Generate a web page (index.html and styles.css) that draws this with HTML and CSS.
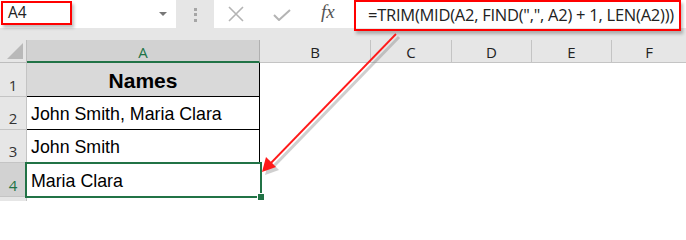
FILE: index.html
```html
<!DOCTYPE html>
<html>
<head>
<meta charset="utf-8">
<link rel="stylesheet" href="styles.css">
</head>
<body>
<div class="app">
  <div class="formula-bar">
    <div class="namebox">
      <span class="name">A4</span>
      <span class="drop"></span>
      <div class="hl hl-name"></div>
    </div>
    <div class="sep"><span class="dots"></span></div>
    <div class="tools">
      <svg class="ico" width="18" height="16" viewBox="0 0 18 16"><path d="M2 1 L16 15 M16 1 L2 15" stroke="#b4b4b4" stroke-width="1.6" fill="none"/></svg>
      <svg class="ico" width="18" height="12" viewBox="0 0 18 12"><path d="M1 6 L6 11 L17 1" stroke="#b4b4b4" stroke-width="2" fill="none"/></svg>
      <span class="fx">fx</span>
    </div>
    <div class="formula">
      <span class="ftext">=TRIM(MID(A2, FIND(",", A2) + 1, LEN(A2)))</span>
      <div class="hl hl-formula"></div>
    </div>
  </div>
  <div class="gap"></div>
  <div class="sheet">
    <div class="corner"><span class="tri"></span></div>
    <div class="ch ch-sel">A</div>
    <div class="ch">B</div>
    <div class="ch">C</div>
    <div class="ch">D</div>
    <div class="ch">E</div>
    <div class="ch ch-last">F</div>

    <div class="rh">1</div>
    <div class="cell head">Names</div>
    <div class="blank"></div>

    <div class="rh">2</div>
    <div class="cell">John Smith, Maria Clara</div>
    <div class="blank"></div>

    <div class="rh">3</div>
    <div class="cell">John Smith</div>
    <div class="blank"></div>

    <div class="rh rh-sel">4</div>
    <div class="cell sel">Maria Clara<span class="handle"></span></div>
    <div class="blank"></div>

    <div class="rh rh-tail"></div>
    <div class="tail"></div>
    <div class="blank"></div>
  </div>
  <svg class="arrow" width="686" height="201" viewBox="0 0 686 201">
    <g transform="translate(3,3)" opacity="0.35">
      <line x1="396" y1="34" x2="269" y2="165" stroke="#777" stroke-width="3"/>
      <path d="M262 172 L266 157 L276 167 Z" fill="#777"/>
    </g>
    <line x1="396" y1="34" x2="269" y2="165" stroke="#ff1a1a" stroke-width="1.8"/>
    <path d="M262 172 L266 157 L276 167 Z" fill="#ff1a1a"/>
  </svg>
</div>
</body>
</html>
```

FILE: styles.css
```css
html, body {
  margin: 0;
  padding: 0;
  background: #fff;
}
body {
  font-family: "Liberation Sans", Arial, sans-serif;
}
.app {
  position: relative;
  width: 686px;
  height: 201px;
  overflow: hidden;
  background: #e6e6e6;
}
.formula-bar {
  display: flex;
  height: 28px;
}
.namebox {
  position: relative;
  width: 176px;
  background: #fff;
  display: flex;
  align-items: center;
  padding-left: 8px;
  box-sizing: border-box;
}
.name {
  font-family: "Open Sans", sans-serif;
  font-size: 15.5px;
  color: #222;
  margin-top: -4px;
}
.drop {
  position: absolute;
  left: 159px;
  top: 12px;
  width: 0;
  height: 0;
  border-left: 4px solid transparent;
  border-right: 4px solid transparent;
  border-top: 4px solid #777;
}
.sep {
  width: 38px;
  display: flex;
  justify-content: center;
}
.dots {
  margin-top: 8px;
  width: 3px;
  height: 14px;
  background: repeating-linear-gradient(#a6a6a6 0 3px, transparent 3px 5.5px);
}
.tools {
  width: 139px;
  background: #fff;
  display: flex;
  align-items: center;
  box-sizing: border-box;
  padding-left: 13px;
}
.ico:first-child {
  margin-top: -1px;
  margin-right: 28px;
}
.ico:nth-child(2) {
  margin-top: 1px;
  margin-right: 30px;
}
.fx {
  font-family: "Liberation Serif", serif;
  font-style: italic;
  font-size: 19px;
  color: #555;
  margin-top: -4px;
}
.formula {
  position: relative;
  flex: 1;
  background: #fff;
  display: flex;
  align-items: center;
  padding-left: 15px;
}
.ftext {
  font-family: "Open Sans", sans-serif;
  font-size: 16.5px;
  color: #222;
  letter-spacing: -0.25px;
  white-space: pre;
  margin-top: 1px;
}
.hl {
  position: absolute;
  border: 2px solid #ff0000;
  box-shadow: 2px 3px 3px rgba(0,0,0,0.25);
  box-sizing: border-box;
}
.hl-name {
  left: 1px;
  top: 1px;
  width: 71px;
  height: 24px;
}
.hl-formula {
  left: 1px;
  top: 0;
  width: 327px;
  height: 31px;
}
.gap {
  height: 12px;
}
.sheet {
  display: grid;
  grid-template-columns: 27px 233px 111px 81px 80px 80px 74px;
  grid-template-rows: 23px 34px 33px 33px 34px 4px;
  background: #fff;
}
.corner {
  background: #e6e6e6;
  border-right: 1px solid #bdbdbd;
  border-bottom: 1px solid #bdbdbd;
  box-sizing: border-box;
  position: relative;
}
.tri {
  position: absolute;
  right: 3px;
  bottom: 3px;
  width: 0;
  height: 0;
  border-left: 16px solid transparent;
  border-bottom: 16px solid #b9b9b9;
}
.ch {
  background: #e6e6e6;
  border-right: 1px solid #c4c4c4;
  border-bottom: 1px solid #c4c4c4;
  box-sizing: border-box;
  display: flex;
  align-items: center;
  justify-content: center;
  font-family: "Open Sans", sans-serif;
  font-size: 15px;
  color: #222;
  padding-top: 2px;
}
.ch-last {
  border-right: none;
}
.ch-sel {
  background: #d2d2d2;
  color: #217346;
  border-bottom: 2px solid #217346;
  border-right: 1px solid #b0b0b0;
}
.rh {
  background: #e6e6e6;
  border-right: 1px solid #c4c4c4;
  border-bottom: 1px solid #c4c4c4;
  box-sizing: border-box;
  display: flex;
  align-items: flex-end;
  justify-content: center;
  font-family: "Open Sans", sans-serif;
  font-size: 15px;
  color: #333;
  padding-bottom: 1px;
  line-height: 20px;
}
.rh-sel {
  background: #d2d2d2;
  color: #217346;
}
.rh-tail {
  border-bottom: none;
}
.cell {
  position: relative;
  grid-column: 2;
  border-right: 1px solid #000;
  border-bottom: 1px solid #000;
  box-sizing: border-box;
  display: flex;
  align-items: center;
  padding-left: 4px;
  padding-top: 3px;
  font-size: 17.8px;
  color: #000;
}
.head {
  background: #d9d9d9;
  justify-content: center;
  font-weight: bold;
  font-size: 21px;
  padding-left: 0;
}
.sel {
  border: none;
  outline: 2px solid #217346;
  outline-offset: -1px;
  margin-left: -1px;
  width: calc(100% + 2px);
  padding-left: 5px;
  padding-top: 2px;
}
.handle {
  position: absolute;
  right: -4px;
  bottom: -4px;
  width: 6px;
  height: 6px;
  background: #217346;
  border: 1px solid #fff;
}
.tail {
  grid-column: 2;
  border-right: 1px solid #d4d4d4;
  box-sizing: border-box;
}
.blank {
  grid-column: 3 / -1;
  background: #fff;
}
.arrow {
  position: absolute;
  left: 0;
  top: 0;
  pointer-events: none;
}
```
